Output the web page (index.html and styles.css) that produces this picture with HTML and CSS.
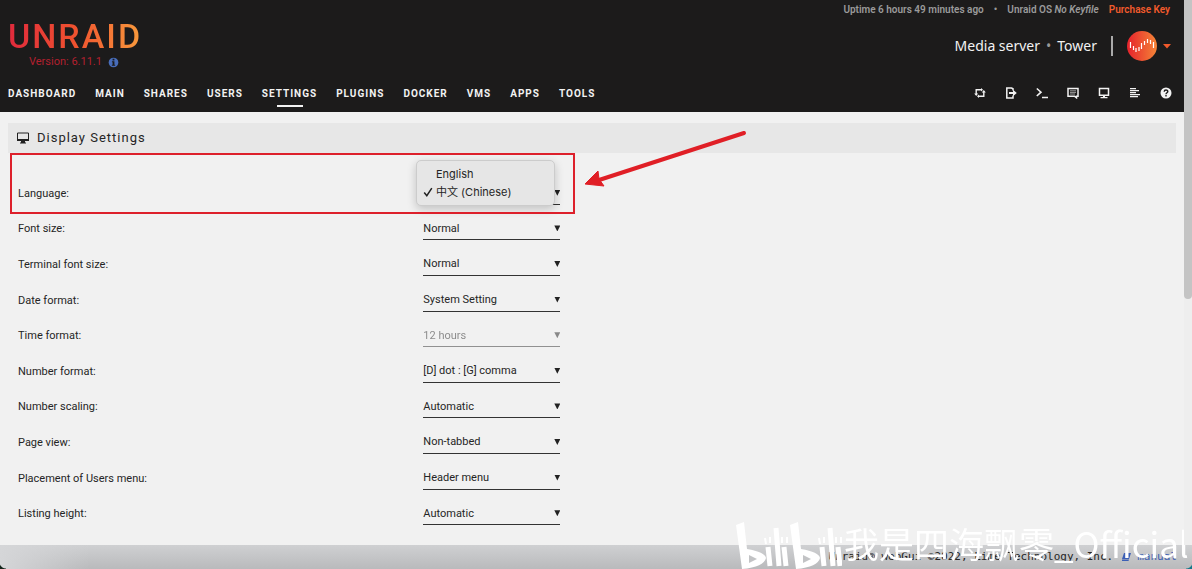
FILE: index.html
```html
<!DOCTYPE html>
<html lang="en">
<head>
<meta charset="utf-8">
<title>Tower/DisplaySettings</title>
<link rel="stylesheet" href="styles.css">
</head>
<body>
<header class="header">
  <div class="brand">
    <a class="logo" href="#">UNRAID</a>
    <div class="version">Version: 6.11.1
      <svg class="info" viewBox="0 0 12 12" aria-hidden="true"><circle cx="6" cy="6" r="5.3"/><path d="M5 2h2v1.7H5zM4.3 4.7H7v3.8h.8v1H4.2v-1H5V5.7h-.7z"/></svg>
    </div>
  </div>
  <div class="server">
    <div class="status"><span>Uptime 6 hours 49 minutes ago</span><span class="dot">•</span><span>Unraid OS <em>No Keyfile</em></span><a class="purchase" href="#">Purchase Key</a></div>
    <div class="identity">
      <span>Media server</span><span class="middot">•</span><span>Tower</span><span class="divider"></span>
      <button class="account" aria-label="Account">
        <svg class="avatar" viewBox="0 0 30 30"><defs><linearGradient id="avatar-fill"><stop offset="0" stop-color="#e5222c"/><stop offset="1" stop-color="#f58537"/></linearGradient></defs><circle cx="15" cy="15" r="15" fill="url(#avatar-fill)"/><path d="M3.500 11v6M6.500 15v4M9 17v4M12 16v4M14.500 12v6M17.500 10v4M20.500 8v4M23.500 9v4M26.500 11v6" stroke="#fff" stroke-width="1.200"/></svg>
        <svg class="caret" viewBox="0 0 8 5"><path d="M0 0h8L4 4.500z" fill="#f15a2c"/></svg>
      </button>
    </div>
  </div>
  <nav class="nav">
    <a href="#">DASHBOARD</a><a href="#">MAIN</a><a href="#">SHARES</a><a href="#">USERS</a><a class="active" href="#">SETTINGS</a><a href="#">PLUGINS</a><a href="#">DOCKER</a><a href="#">VMS</a><a href="#">APPS</a><a href="#">TOOLS</a>
  </nav>
  <div class="tools">
    <button aria-label="Switch language"><svg viewBox="0 0 12 12"><path d="M7.500 2.800H2.200V7.500M4.500 9.200h5.300V4.500" fill="none" stroke="#f2f2f2" stroke-width="1.400"/><path d="M.2 6.500h4L2.200 9zM7.800 5.500h4L9.800 3zM7 1l2 1.800L7 4.600zM5 7.400 3 9.200 5 11z"/></svg></button>
    <button aria-label="Log out"><svg viewBox="0 0 12 12"><path d="M8 3.500V1.800L6.500 1H1.800v10H8V8.500" fill="none" stroke="#f2f2f2" stroke-width="1.500"/><path d="M4 5h4V2.800L11.800 6 8 9.200V7H4z"/></svg></button>
    <button aria-label="Terminal"><svg viewBox="0 0 12 12"><path d="M.8 1.500 5 5.200.8 9M6 10.500h6" fill="none" stroke="#f2f2f2" stroke-width="1.600"/></svg></button>
    <button aria-label="Feedback"><svg viewBox="0 0 12 12"><path d="M1 1.500h10v7.700H9.500v1.600L7.500 9.200H1z" fill="none" stroke="#f2f2f2" stroke-width="1.500"/><path d="M3 3.800h6M3 5.400h6M3 7h5" stroke="#bbb" stroke-width=".8"/></svg></button>
    <button aria-label="System information"><svg viewBox="0 0 12 12"><path d="M1.500 1.500h9v6.700h-9z" fill="none" stroke="#f2f2f2" stroke-width="1.500"/><path d="M5 8h2v2h2.500v1.300h-7V10H5z"/></svg></button>
    <button aria-label="Log"><svg viewBox="0 0 12 12"><path d="M1 1h6v1.300H1zM1 3h9v1.300H1zM1 5h6v1.300H1zM1 7h10v1.300H1zM1 9h8v1.300H1z"/></svg></button>
    <button aria-label="Help"><svg viewBox="0 0 12 12"><circle cx="6" cy="6" r="5.500"/><path d="M4.200 4.700C4.200 2.500 7.800 2.500 7.800 4.600 7.800 5.800 6 5.800 6 7.200M6 8v1.400" fill="none" stroke="#1c1b1b" stroke-width="1.400"/></svg></button>
  </div>
</header>
<main class="page">
  <h1 class="title"><svg viewBox="0 0 14 12" aria-hidden="true"><path d="M1.500 1h11v7.500h-11z" fill="none" stroke="#222" stroke-width="1"/><path d="M1 7h12v2H9v1.500H10V11.500H4v-1H5V9H1z" fill="#222"/></svg>Display Settings</h1>
  <form class="settings">
    <div class="row"><label for="language">Language:</label><span class="pick"><select id="language"><option>中文 (Chinese)</option><option>English</option></select></span></div>
    <div class="row"><label for="font">Font size:</label><span class="pick"><select id="font"><option>Normal</option></select></span></div>
    <div class="row"><label for="term">Terminal font size:</label><span class="pick"><select id="term"><option>Normal</option></select></span></div>
    <div class="row"><label for="date">Date format:</label><span class="pick"><select id="date"><option>System Setting</option></select></span></div>
    <div class="row"><label for="time">Time format:</label><span class="pick off"><select id="time" disabled><option>12 hours</option></select></span></div>
    <div class="row"><label for="number">Number format:</label><span class="pick"><select id="number"><option>[D] dot : [G] comma</option></select></span></div>
    <div class="row"><label for="scale">Number scaling:</label><span class="pick"><select id="scale"><option>Automatic</option></select></span></div>
    <div class="row"><label for="view">Page view:</label><span class="pick"><select id="view"><option>Non-tabbed</option></select></span></div>
    <div class="row"><label for="users">Placement of Users menu:</label><span class="pick"><select id="users"><option>Header menu</option></select></span></div>
    <div class="row"><label for="listing">Listing height:</label><span class="pick"><select id="listing"><option>Automatic</option></select></span></div>
  </form>
</main>
<ul class="menu">
  <li>English</li>
  <li><svg viewBox="0 0 10 10" aria-hidden="true"><path d="M1.200 5.500 3.800 8.700 8.800 1.200" fill="none" stroke="#222" stroke-width="1.500"/></svg>中文 (Chinese)</li>
</ul>
<div class="highlight"></div>
<svg class="arrow" viewBox="0 0 166 60" aria-hidden="true"><path d="M160 4 12 52" stroke="#e01f26" stroke-width="4" stroke-linecap="round"/><path d="M1 55 14 42 15 50 20 57z" fill="#e01f26" stroke="#e01f26"/></svg>
<footer class="footer"><span>Unraid® webGui ©2022, Lime Technology, Inc.</span><a href="#"><svg viewBox="0 0 10 10" aria-hidden="true"><path d="M3 1h7L8 7H1zM1 7.500h7l-.5 1.500H1z" fill="#3c5fb5"/></svg>manual</a></footer>
<div class="watermark">
  <svg viewBox="0 0 106 48" role="img" aria-label="bilibili" fill="none" stroke="#fff"><g id="half"><path d="M0 4 8 1 11 28Q29 31 30 37 28 46 6 48Z" fill="#fff" stroke="none"/><path d="M13 34v8l8-4z" fill="#c2c3c5" stroke="none"/><path d="m32 26 2 19M40 7l3 38M48 26l2 19" stroke-width="5"/><path d="m29 17 1 6M34 16v6M46 16v6M51 16v6" stroke-width="2"/></g><use href="#half" x="54"/></svg>
  <span>我是四海飘零_Official</span>
</div>
<div class="scrollbar"></div>
<i class="corner left"></i><i class="corner right"></i>
</body>
</html>
```

FILE: styles.css
```css
* { box-sizing: border-box; }
body {
  margin: 0;
  min-height: 100vh;
  padding-right: 8px;
  overflow: hidden;
  background: #f1f1f1;
  color: #252525;
  font: 11px/16px Roboto, "Noto Sans CJK SC", sans-serif;
}
a { color: inherit; text-decoration: none; }
button { padding: 0; border: 0; background: none; color: inherit; }
svg { display: block; }

.header {
  display: grid;
  grid-template-columns: 1fr auto;
  grid-template-rows: 76px 36px;
  padding: 0 12px 0 8px;
  background: #1c1b1b;
  color: #f2f2f2;
}
.brand { padding-top: 16px; }
.logo {
  display: block;
  width: max-content;
  background: linear-gradient(90deg, #e02a3c, #f0522f 50%, #f99b3c);
  background-clip: text;
  color: transparent;
  font: 500 34px/40px Roboto, sans-serif;
  letter-spacing: 2px;
}
.version {
  display: flex;
  align-items: center;
  gap: 6px;
  margin-top: -2px;
  padding-left: 21px;
  color: #b3202f;
}
.info { width: 11px; height: 11px; fill: #486dba; }
.info path { fill: #1c1b1b; }
.server { display: flex; flex-direction: column; align-items: flex-end; }
.status {
  display: flex;
  padding: 2px 2px 0 0;
  color: #9a9a9a;
  font-size: 10px;
  font-weight: 600;
}
.dot { margin: 0 10px; }
.purchase { margin-left: 10px; color: #f15a2c; }
.identity {
  display: flex;
  align-items: center;
  margin: 13px 1px 0 0;
  font: 14px/30px "Noto Sans", sans-serif;
}
.middot { margin: 0 6px; color: #999; }
.divider { width: 2px; height: 20px; margin: 0 14px; background: #aaa; }
.account { display: flex; align-items: center; gap: 6px; }
.avatar { width: 30px; height: 30px; }
.caret { width: 8px; height: 5px; }
.nav {
  display: flex;
  gap: 19px;
  padding-top: 9px;
  font-size: 10px;
  font-weight: 700;
  line-height: 18px;
  letter-spacing: 1px;
}
.active::after {
  content: "";
  display: block;
  width: 26px;
  height: 2px;
  margin: 2px auto 0;
  background: #f2f2f2;
}
.tools { display: flex; gap: 19px; justify-self: end; padding: 11px 0 0; }
.tools button { height: 12px; }
.tools svg { width: 12px; height: 12px; fill: #f2f2f2; }

.page { padding: 11px 8px 0; }
.title {
  display: flex;
  align-items: center;
  gap: 7px;
  margin: 0;
  padding: 0 8px;
  background: #e7e7e7;
  font-size: 13px;
  font-weight: 400;
  line-height: 30px;
  letter-spacing: 1px;
}
.title svg { width: 14px; height: 12px; }
.settings { display: grid; grid-auto-rows: 1fr; min-height: 356px; margin-top: 22px; padding-left: 10px; }
.row { display: grid; grid-template-columns: 35% 137px; align-items: center; }
.row label { padding-top: 2px; }
.pick { position: relative; }
.pick::after {
  content: "";
  position: absolute;
  top: 9px;
  right: 0;
  width: 6px;
  height: 6px;
  background: #222;
  clip-path: polygon(0 0, 100% 0, 50% 100%);
}
select {
  appearance: none;
  display: block;
  width: 100%;
  height: 24px;
  padding: 2px 0 0;
  border: 0;
  border-bottom: 1px solid #333;
  border-radius: 0;
  background: none;
  color: #252525;
  font: inherit;
}
.off { opacity: .5; }
select:disabled { color: #252525; opacity: 1; }

.menu {
  position: absolute;
  top: 160px;
  left: 416px;
  width: 139px;
  margin: 0;
  padding: 4px 0;
  border: 1px solid #ccc;
  border-radius: 5px;
  background: #e6e6e6;
  box-shadow: 0 3px 10px #0003;
  font: 11px/18px Inter, "Noto Sans CJK SC", sans-serif;
  list-style: none;
}
.menu li { position: relative; padding-left: 19px; }
.menu svg { position: absolute; top: 4px; left: 6px; width: 10px; height: 10px; }
.highlight { position: absolute; top: 153px; left: 10px; width: 565px; height: 61px; border: 2px solid #dd202b; }
.arrow { position: absolute; top: 129px; left: 584px; width: 166px; height: 60px; }

.footer {
  position: fixed;
  right: 0;
  bottom: 0;
  left: 0;
  display: flex;
  justify-content: flex-end;
  gap: 8px;
  height: 24px;
  padding-right: 15px;
  background: linear-gradient(90deg, #d5d6d8, #d5d6d800 90px), linear-gradient(#cfd0d2, #b9babc);
  font: 11px/24px "DejaVu Sans Mono", monospace;
}
.footer a { display: flex; align-items: center; gap: 6px; color: #3c5fb5; }
.footer svg { width: 10px; height: 10px; }
.watermark {
  position: fixed;
  bottom: 0;
  left: 736px;
  display: flex;
  align-items: flex-end;
  gap: 2px;
  color: #fff;
  font: 35px/52px "Noto Sans CJK SC", sans-serif;
  white-space: nowrap;
}
.watermark svg { width: 106px; height: 48px; }
.scrollbar { position: fixed; top: 0; right: 0; bottom: 24px; width: 8px; background: #eee; }
.scrollbar::before { content: ""; display: block; height: 299px; border-radius: 0 0 4px 4px; background: #c4c4c4; }
.corner { position: fixed; bottom: 0; width: 6px; height: 7px; }
.left { left: 0; background: radial-gradient(circle at 100% 0, transparent 6px, #13251b 7px); }
.right { right: 0; background: radial-gradient(circle at 0 0, transparent 6px, #16798b 7px); }
```
